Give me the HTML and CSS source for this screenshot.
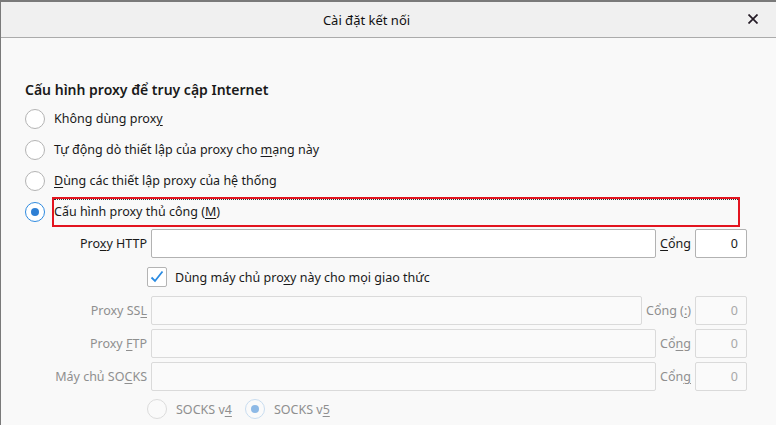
FILE: index.html
```html
<!DOCTYPE html>
<html>
<head>
<meta name="viewport" content="width=device-width, initial-scale=1">
<link rel="stylesheet" href="styles.css">
</head>
<body>

<div class="dialog">
  <div class="titlebar">
    <span class="title">Cài đặt kết nối</span>
    <span class="close">
      <svg width="10" height="10" viewBox="0 0 10 10"><path d="M0.5 0.5 L9.5 9.5 M9.5 0.5 L0.5 9.5" stroke="#241b26" stroke-width="1.7" fill="none"/></svg>
    </span>
  </div>

  <div class="content">
    <h1 class="group-title">Cấu hình proxy để truy cập Internet</h1>

    <div class="radio-list">
      <div class="radio-row">
        <span class="radio"></span>
        <span class="radio-label">Không dùng prox<u>y</u></span>
      </div>
      <div class="radio-row">
        <span class="radio"></span>
        <span class="radio-label">Tự động dò thiết lập của proxy cho <u>m</u>ạng này</span>
      </div>
      <div class="radio-row">
        <span class="radio"></span>
        <span class="radio-label"><u>D</u>ùng các thiết lập proxy của hệ thống</span>
      </div>
      <div class="radio-row">
        <span class="radio checked"></span>
        <span class="focus-box"><span class="focus-inner">Cấu hình proxy thủ công (<u>M</u>)</span></span>
      </div>
    </div>

    <div class="manual">
      <div class="field-row">
        <span class="field-label">Pro<u>x</u>y HTTP</span>
        <span class="text-input"></span>
        <span class="port-label"><u>C</u>ổng</span>
        <span class="text-input port">0</span>
      </div>
      <div class="check-row">
        <span class="checkbox">
          <svg width="14" height="14" viewBox="0 0 14 14"><path d="M1.5 7.5 L5 11 L12.5 1.5" stroke="#2a8be2" stroke-width="1.8" fill="none"/></svg>
        </span>
        <span>Dùng máy chủ pro<u>x</u>y này cho mọi giao thức</span>
      </div>
      <div class="field-row disabled">
        <span class="field-label">Proxy SS<u>L</u></span>
        <span class="text-input"></span>
        <span class="port-label">Cổng (<u>:</u>)</span>
        <span class="text-input port">0</span>
      </div>
      <div class="field-row disabled">
        <span class="field-label">Proxy <u>F</u>TP</span>
        <span class="text-input"></span>
        <span class="port-label">Cổ<u>n</u>g</span>
        <span class="text-input port">0</span>
      </div>
      <div class="field-row disabled">
        <span class="field-label">Máy chủ SO<u>C</u>KS</span>
        <span class="text-input"></span>
        <span class="port-label">Cổn<u>g</u></span>
        <span class="text-input port">0</span>
      </div>
      <div class="socks-row disabled">
        <span class="radio"></span>
        <span class="socks-label">SOCKS v<u>4</u></span>
        <span class="radio checked"></span>
        <span class="socks-label">SOCKS v<u>5</u></span>
      </div>
    </div>
  </div>
</div>

</body>
</html>
```

FILE: styles.css
```css
* {
  box-sizing: border-box;
}

body {
  margin: 0;
  font-family: "Noto Sans", "Open Sans", sans-serif;
  font-size: 12.5px;
  color: #1a1a1a;
  background-color: #f9f9f9;
}

u {
  text-decoration-thickness: 1px;
  text-underline-offset: 2px;
}

.dialog {
  height: 425px;
  border-top: 2px solid #7a7a7a;
  border-left: 1px solid #7a7a7a;
  background-color: #f9f9f9;
  overflow: hidden;
}

.titlebar {
  height: 36px;
  display: flex;
  align-items: center;
  justify-content: center;
  padding-right: 44px;
  background-color: #f0f0f0;
  border-bottom: 1px solid #ababab;
  position: relative;
}

.title {
  font-size: 13px;
  color: #111;
}

.close {
  position: absolute;
  right: 18px;
  top: 12px;
  width: 10px;
  height: 10px;
  display: flex;
}

.content {
  padding: 42px 29px 0 24px;
}

.group-title {
  margin: 0;
  font-size: 14px;
  font-weight: 600;
  line-height: 20px;
  color: #1a1a1a;
}

.radio-list {
  margin-top: 3px;
}

.radio-row {
  height: 31px;
  display: flex;
  align-items: center;
}

.radio {
  width: 20px;
  height: 20px;
  border-radius: 50%;
  border: 1px solid #b4b4b4;
  background-color: #fff;
  flex: none;
  display: flex;
  align-items: center;
  justify-content: center;
}

.radio.checked {
  border: 1.5px solid #2f8be0;
}

.radio.checked:after {
  content: "";
  width: 8px;
  height: 8px;
  border-radius: 50%;
  background-color: #2e7fd4;
}

.radio-label {
  margin-left: 9px;
}

.focus-box {
  flex: 1;
  height: 30px;
  margin-left: 7px;
  margin-right: 7px;
  border: 2px solid #e3141f;
  display: flex;
}

.focus-inner {
  flex: 1;
  border-top: 1px dotted #333;
  display: flex;
  align-items: center;
  padding-bottom: 1px;
}

.manual {
  margin-top: 2px;
  margin-left: 28px;
  display: flex;
  flex-direction: column;
  gap: 4px;
}

.field-row {
  height: 29px;
  display: flex;
  align-items: center;
  gap: 4px;
}

.field-label {
  width: 94px;
  text-align: right;
  white-space: nowrap;
  flex: none;
}

.text-input {
  flex: 1;
  height: 29px;
  border: 1px solid #b2b2b2;
  border-radius: 2px;
  background-color: #fff;
  display: flex;
  align-items: center;
  justify-content: flex-end;
  padding-right: 8px;
}

.text-input.port {
  flex: none;
  width: 52px;
}

.port-label {
  flex: none;
  white-space: nowrap;
}

.check-row {
  height: 30px;
  display: flex;
  align-items: center;
  padding-left: 94px;
  gap: 8px;
}

.checkbox {
  width: 20px;
  height: 20px;
  border: 1px solid #b4b4b4;
  border-radius: 2px;
  background-color: #fff;
  display: flex;
  align-items: center;
  justify-content: center;
}

.disabled {
  color: #8f8f8f;
}

.disabled .text-input {
  border-color: #dadada;
  background-color: #fafafa;
  color: #a8a8a8;
}

.socks-row {
  height: 28px;
  display: flex;
  align-items: center;
  padding-left: 94px;
}

.socks-row .radio {
  border-color: #dcdcdc;
  background-color: #fafafa;
}

.socks-row .radio.checked {
  border: 1.5px solid #c9ddf0;
}

.socks-row .radio.checked:after {
  background-color: #8db9e6;
}

.socks-label {
  margin-left: 9px;
  margin-right: 13px;
}
```
